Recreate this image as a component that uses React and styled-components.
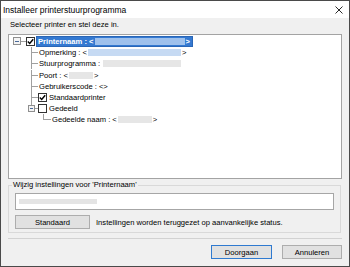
import React from "react";
import styled, { createGlobalStyle } from "styled-components";

const GlobalStyle = createGlobalStyle`
  html, body { margin: 0; padding: 0; background: #ffffff; }
  body { font-family: "Liberation Sans", Arial, sans-serif; color: #000; }
  * { box-sizing: border-box; }
`;

const Window = styled.div`
  width: 350px;
  height: 267px;
  border: 1px solid #4a4a4a;
  background: #f0f0f0;
  display: flex;
  flex-direction: column;
`;

const TitleBar = styled.div`
  height: 17px;
  flex: none;
  background: #ffffff;
  display: flex;
  align-items: center;
  justify-content: space-between;
  padding: 0 6px 0 2px;
  font-size: 8.5px;
`;

const Body = styled.div`
  flex: 1;
  display: flex;
  flex-direction: column;
  padding: 0 7px;
`;

const Prompt = styled.div`
  height: 16px;
  padding: 1px 0 0 2px;
  line-height: 12px;
  font-size: 7.6px;
`;

const TreeBox = styled.div`
  height: 145px;
  flex: none;
  border: 1px solid #a3a3a3;
  background: #ffffff;
  padding-top: 1px;
`;

const Row = styled.div`
  display: flex;
  align-items: center;
  height: 11.2px;
  white-space: nowrap;
  font-size: 7.6px;
`;

const Label = styled.span`
  display: inline-flex;
  align-items: center;
  height: 11px;
  margin-left: ${(p) => p.$gap || 1}px;
  padding: 0 ${(p) => (p.$selected ? 2 : 0)}px 0 ${(p) => (p.$selected ? 1 : 0)}px;
  background: ${(p) => (p.$selected ? "#3479d1" : "transparent")};
  border: ${(p) => (p.$selected ? "1px solid #2a66b6" : "none")};
  color: ${(p) => (p.$selected ? "#ffffff" : "#000000")};
  font-weight: ${(p) => (p.$selected ? 700 : 400)};
`;

const tones = {
  sel: "#9fc1ec",
  blue: "#c6daf3",
  gray: "#e6e6e6",
};

const Blur = styled.span`
  display: inline-block;
  width: ${(p) => p.$w}px;
  height: 7px;
  margin: 0 1px;
  background: ${(p) => tones[p.$tone]};
`;

const CheckBox = styled.span`
  flex: none;
  width: 9px;
  height: 9px;
  border: 1px solid #333333;
  background: #ffffff;
  display: inline-flex;
  align-items: center;
  justify-content: center;
`;

const GroupBox = styled.fieldset`
  margin: 1px 1px 0 0;
  padding: 0 6px 3px 6px;
  border: 1px solid #d9d9d9;
  min-width: 0;
`;

const Legend = styled.legend`
  margin-left: -3px;
  padding: 0 1px;
  font-size: 7.6px;
  line-height: 10px;
`;

const Field = styled.div`
  margin-top: 3px;
  height: 17px;
  border: 1px solid #a6a6a6;
  background: #ffffff;
  display: flex;
  align-items: center;
  padding-left: 3px;
`;

const FieldBlur = styled.span`
  width: 78px;
  height: 5px;
  background: #e4e4e4;
`;

const ActionRow = styled.div`
  margin-top: 5px;
  display: flex;
  align-items: center;
  gap: 6px;
  font-size: 7.6px;
`;

const Button = styled.button`
  width: ${(p) => p.$w}px;
  height: 14px;
  padding: 0;
  margin: 0;
  border: 1px solid ${(p) => (p.$primary ? "#2f7ad0" : "#adadad")};
  background: #e1e1e1;
  font-family: "Liberation Sans", Arial, sans-serif;
  font-size: 7.6px;
  color: #000;
`;

const Separator = styled.div`
  margin-top: 5px;
  height: 1px;
  background: #d2d2d2;
`;

const Footer = styled.div`
  margin-top: 6px;
  display: flex;
  justify-content: flex-end;
  gap: 10px;
`;

const LINE = "#a0a0a0";
const H = 11.2;
const CY = 5.5;

function Expander({ x, size }) {
  const y = CY - size / 2;
  return (
    <g>
      <rect x={x + 0.5} y={y + 0.5} width={size - 1} height={size - 1} fill="#f4f4f4" stroke="#8f8f8f" />
      <line x1={x + 2} x2={x + size - 2} y1={CY + 0.5} y2={CY + 0.5} stroke="#4a6a9a" />
    </g>
  );
}

function Gutter({ kind }) {
  const widths = { root: 17, branch: 29, last: 29, leaf2: 42 };
  const w = widths[kind];
  return (
    <svg width={w} height={H} viewBox={`0 0 ${w} ${H}`} shapeRendering="crispEdges" style={{ flex: "none" }}>
      {kind === "root" && (
        <>
          <line x1={12} x2={17} y1={CY + 0.5} y2={CY + 0.5} stroke={LINE} />
          <Expander x={4} size={8} />
        </>
      )}
      {kind === "branch" && (
        <>
          <line x1={22.5} x2={22.5} y1={0} y2={H} stroke={LINE} />
          <line x1={22.5} x2={29} y1={CY + 0.5} y2={CY + 0.5} stroke={LINE} />
        </>
      )}
      {kind === "last" && (
        <>
          <line x1={22.5} x2={22.5} y1={0} y2={2} stroke={LINE} />
          <line x1={26} x2={29} y1={CY + 0.5} y2={CY + 0.5} stroke={LINE} />
          <Expander x={19} size={7} />
        </>
      )}
      {kind === "leaf2" && (
        <>
          <line x1={34.5} x2={34.5} y1={0} y2={CY + 0.5} stroke={LINE} />
          <line x1={34.5} x2={42} y1={CY + 0.5} y2={CY + 0.5} stroke={LINE} />
        </>
      )}
    </svg>
  );
}

function Check({ checked }) {
  return (
    <CheckBox>
      {checked && (
        <svg width="7" height="7" viewBox="0 0 7 7">
          <path d="M0.8 3.6 L2.7 5.5 L6.2 1.2" fill="none" stroke="#000" strokeWidth="1.4" />
        </svg>
      )}
    </CheckBox>
  );
}

function CloseIcon() {
  return (
    <svg width="8" height="8" viewBox="0 0 8 8">
      <path d="M0.5 0.5 L7.5 7.5 M7.5 0.5 L0.5 7.5" stroke="#111" strokeWidth="0.9" />
    </svg>
  );
}

export default function App() {
  return (
    <>
      <GlobalStyle />
      <Window>
        <TitleBar>
          <span>Installeer printerstuurprogramma</span>
          <CloseIcon />
        </TitleBar>
        <Body>
          <Prompt>Selecteer printer en stel deze in.</Prompt>
          <TreeBox>
            <Row>
              <Gutter kind="root" />
              <Check checked />
              <Label $selected>
                Printernaam :&nbsp;&lt;
                <Blur $w={90} $tone="sel" />
                &gt;
              </Label>
            </Row>
            <Row>
              <Gutter kind="branch" />
              <Label>
                Opmerking :&nbsp;&lt;
                <Blur $w={93} $tone="blue" />
                &gt;
              </Label>
            </Row>
            <Row>
              <Gutter kind="branch" />
              <Label>
                Stuurprogramma :&nbsp;
                <Blur $w={78} $tone="gray" />
              </Label>
            </Row>
            <Row>
              <Gutter kind="branch" />
              <Label>
                Poort :&nbsp;&lt;
                <Blur $w={24} $tone="gray" />
                &gt;
              </Label>
            </Row>
            <Row>
              <Gutter kind="branch" />
              <Label>Gebruikerscode :&nbsp;&lt;&gt;</Label>
            </Row>
            <Row>
              <Gutter kind="branch" />
              <Check checked />
              <Label $gap={2}>Standaardprinter</Label>
            </Row>
            <Row>
              <Gutter kind="last" />
              <Check />
              <Label $gap={2}>Gedeeld</Label>
            </Row>
            <Row>
              <Gutter kind="leaf2" />
              <Label>
                Gedeelde naam :&nbsp;&lt;
                <Blur $w={34} $tone="gray" />
                &gt;
              </Label>
            </Row>
          </TreeBox>
          <GroupBox>
            <Legend>Wijzig instellingen voor 'Printernaam'</Legend>
            <Field>
              <FieldBlur />
            </Field>
            <ActionRow>
              <Button $w={75}>Standaard</Button>
              <span>Instellingen worden teruggezet op aanvankelijke status.</span>
            </ActionRow>
          </GroupBox>
          <Separator />
          <Footer>
            <Button $w={61} $primary>Doorgaan</Button>
            <Button $w={60}>Annuleren</Button>
          </Footer>
        </Body>
      </Window>
    </>
  );
}
